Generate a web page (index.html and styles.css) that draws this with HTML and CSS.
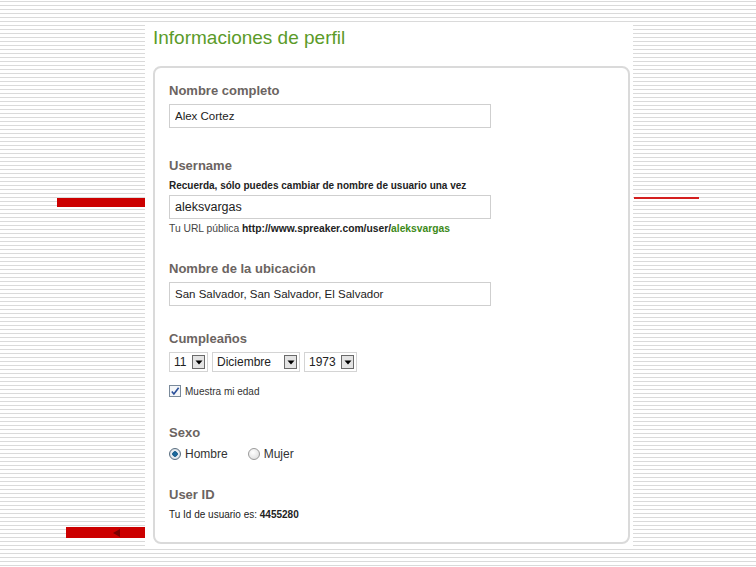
FILE: index.html
```html
<!DOCTYPE html>
<html lang="es">
<head>
    <meta charset="UTF-8">
    <meta name="viewport" content="width=device-width, initial-scale=1.0">
    <title>Informaciones de perfil</title>
    <link rel="stylesheet" href="styles.css">
</head>
<body>

    <!-- slide decorations -->
    <div class="mark mark-left"></div>
    <div class="mark mark-right"></div>
    <div class="mark mark-back"><span class="back-arrow"></span></div>

    <div class="page">
        <h1>Informaciones de perfil</h1>

        <div class="card">
            <div class="field">
                <div class="field-label">Nombre completo</div>
                <input type="text" class="text-input" value="Alex Cortez">
            </div>

            <div class="field field-username">
                <div class="field-label">Username</div>
                <div class="hint">Recuerda, sólo puedes cambiar de nombre de usuario una vez</div>
                <input type="text" class="text-input big" value="aleksvargas">
                <div class="url-line">Tu URL pública <b>http://www.spreaker.com/user/<span class="green">aleksvargas</span></b></div>
            </div>

            <div class="field">
                <div class="field-label">Nombre de la ubicación</div>
                <input type="text" class="text-input" value="San Salvador, San Salvador, El Salvador">
            </div>

            <div class="field">
                <div class="field-label">Cumpleaños</div>
                <div class="date-row">
                    <div class="dropdown dd-day"><span>11</span><span class="dd-btn"><svg width="8" height="5" viewBox="0 0 8 5"><path d="M0.5 0.5h7L4 4.5z" fill="#000"/></svg></span></div>
                    <div class="dropdown dd-month"><span>Diciembre</span><span class="dd-btn"><svg width="8" height="5" viewBox="0 0 8 5"><path d="M0.5 0.5h7L4 4.5z" fill="#000"/></svg></span></div>
                    <div class="dropdown dd-year"><span>1973</span><span class="dd-btn"><svg width="8" height="5" viewBox="0 0 8 5"><path d="M0.5 0.5h7L4 4.5z" fill="#000"/></svg></span></div>
                </div>
                <div class="check-row">
                    <span class="checkbox"><svg width="11" height="11" viewBox="0 0 11 11"><path d="M2 5.5l2.3 2.8L9.5 1.5" fill="none" stroke="#2a4f9a" stroke-width="1.8"/></svg></span>
                    <span>Muestra mi edad</span>
                </div>
            </div>

            <div class="field field-sexo">
                <div class="field-label">Sexo</div>
                <div class="radio-row">
                    <span class="radio checked"></span><span class="radio-text">Hombre</span>
                    <span class="radio"></span><span class="radio-text">Mujer</span>
                </div>
            </div>

            <div class="field field-id">
                <div class="field-label">User ID</div>
                <div class="id-line">Tu Id de usuario es: <b>4455280</b></div>
            </div>
        </div>
    </div>

</body>
</html>
```

FILE: styles.css
```css
html {
    background: repeating-linear-gradient(to bottom, #fff 0, #fff 1px, #dadada 1px, #dadada 2px, #fff 2px, #fff 4px);
}
body {
    margin: 0;
    height: 567px;
    font-family: "Liberation Sans", Arial, sans-serif;
    color: #333;
}
.page {
    width: 488px;
    height: 524px;
    margin: 24px 0 0 145px;
    padding: 3px 0 0 8px;
    box-sizing: border-box;
    background: #fff;
}
h1 {
    margin: 0 0 17px;
    font-size: 19px;
    line-height: 22px;
    font-weight: normal;
    color: #5b9b29;
}
.card {
    width: 477px;
    height: 478px;
    box-sizing: border-box;
    border: 2px solid #dadada;
    border-radius: 8px;
    padding: 15px 0 0 14px;
}
.field {
    margin-top: 25px;
}
.field:first-child {
    margin-top: 0;
}
.field-username {
    margin-top: 30px;
}
.field-sexo {
    margin-top: 28px;
}
.field-id {
    margin-top: 26px;
}
.field-label {
    font-size: 13px;
    line-height: 16px;
    font-weight: bold;
    color: #6b6461;
    margin-bottom: 5px;
}
.text-input {
    display: block;
    width: 322px;
    height: 24px;
    box-sizing: border-box;
    margin: 0;
    padding: 0 5px;
    border: 1px solid #cfcfcf;
    font-family: "Liberation Sans", Arial, sans-serif;
    font-size: 11.5px;
    color: #222;
    outline: none;
}
.text-input.big {
    font-size: 12.5px;
}
.hint {
    font-size: 10px;
    line-height: 14px;
    font-weight: bold;
    color: #222;
    margin-bottom: 2px;
}
.url-line {
    margin-top: 3px;
    font-size: 10.3px;
    line-height: 14px;
    color: #444;
}
.url-line b {
    color: #222;
}
.green {
    color: #3d8a1a;
}
.date-row {
    display: flex;
    gap: 4px;
}
.dropdown {
    display: flex;
    align-items: center;
    justify-content: space-between;
    height: 20px;
    box-sizing: border-box;
    border: 1px solid #d4d4d4;
    padding: 0 2px 0 4px;
    font-size: 12px;
    color: #222;
}
.dd-day { width: 39px; }
.dd-month { width: 88px; }
.dd-year { width: 53px; }
.dd-btn {
    display: flex;
    align-items: center;
    justify-content: center;
    width: 13px;
    height: 14px;
    box-sizing: border-box;
    border: 1px solid #6a6a6a;
    background: #e4e4e4;
}
.check-row {
    display: flex;
    align-items: center;
    gap: 4px;
    margin-top: 13px;
    font-size: 10px;
    color: #333;
}
.checkbox {
    display: flex;
    width: 12px;
    height: 12px;
    box-sizing: border-box;
    border: 1px solid #7a8a9a;
    background: #f4f6f8;
    align-items: center;
    justify-content: center;
}
.radio-row {
    display: flex;
    align-items: center;
    margin-top: 6px;
    font-size: 12px;
    color: #333;
}
.radio {
    width: 12px;
    height: 12px;
    box-sizing: border-box;
    border: 1px solid #9a9a9a;
    border-radius: 50%;
    background: radial-gradient(circle at 40% 35%, #fff, #d8d8d8);
}
.radio.checked {
    border-color: #5a6e80;
    background: radial-gradient(circle, #1a6fa8 0, #1d5f8c 2.5px, #eef2f6 3px, #cfd8e0 6px);
}
.radio-text {
    margin: 0 20px 0 4px;
}
.id-line {
    margin-top: 0;
    font-size: 10px;
    line-height: 14px;
    color: #222;
}

/* decorations from the slide */
.mark {
    position: absolute;
    background: #cc0000;
}
.mark-left {
    left: 57px;
    top: 198px;
    width: 88px;
    height: 9px;
}
.mark-right {
    left: 634px;
    top: 197px;
    width: 65px;
    height: 2px;
    background: #d42020;
}
.mark-back {
    left: 66px;
    top: 527px;
    width: 79px;
    height: 11px;
}
.back-arrow {
    position: absolute;
    left: 47px;
    top: 2px;
    width: 0;
    height: 0;
    border-top: 4px solid transparent;
    border-bottom: 4px solid transparent;
    border-right: 7px solid #7a0000;
}
```
